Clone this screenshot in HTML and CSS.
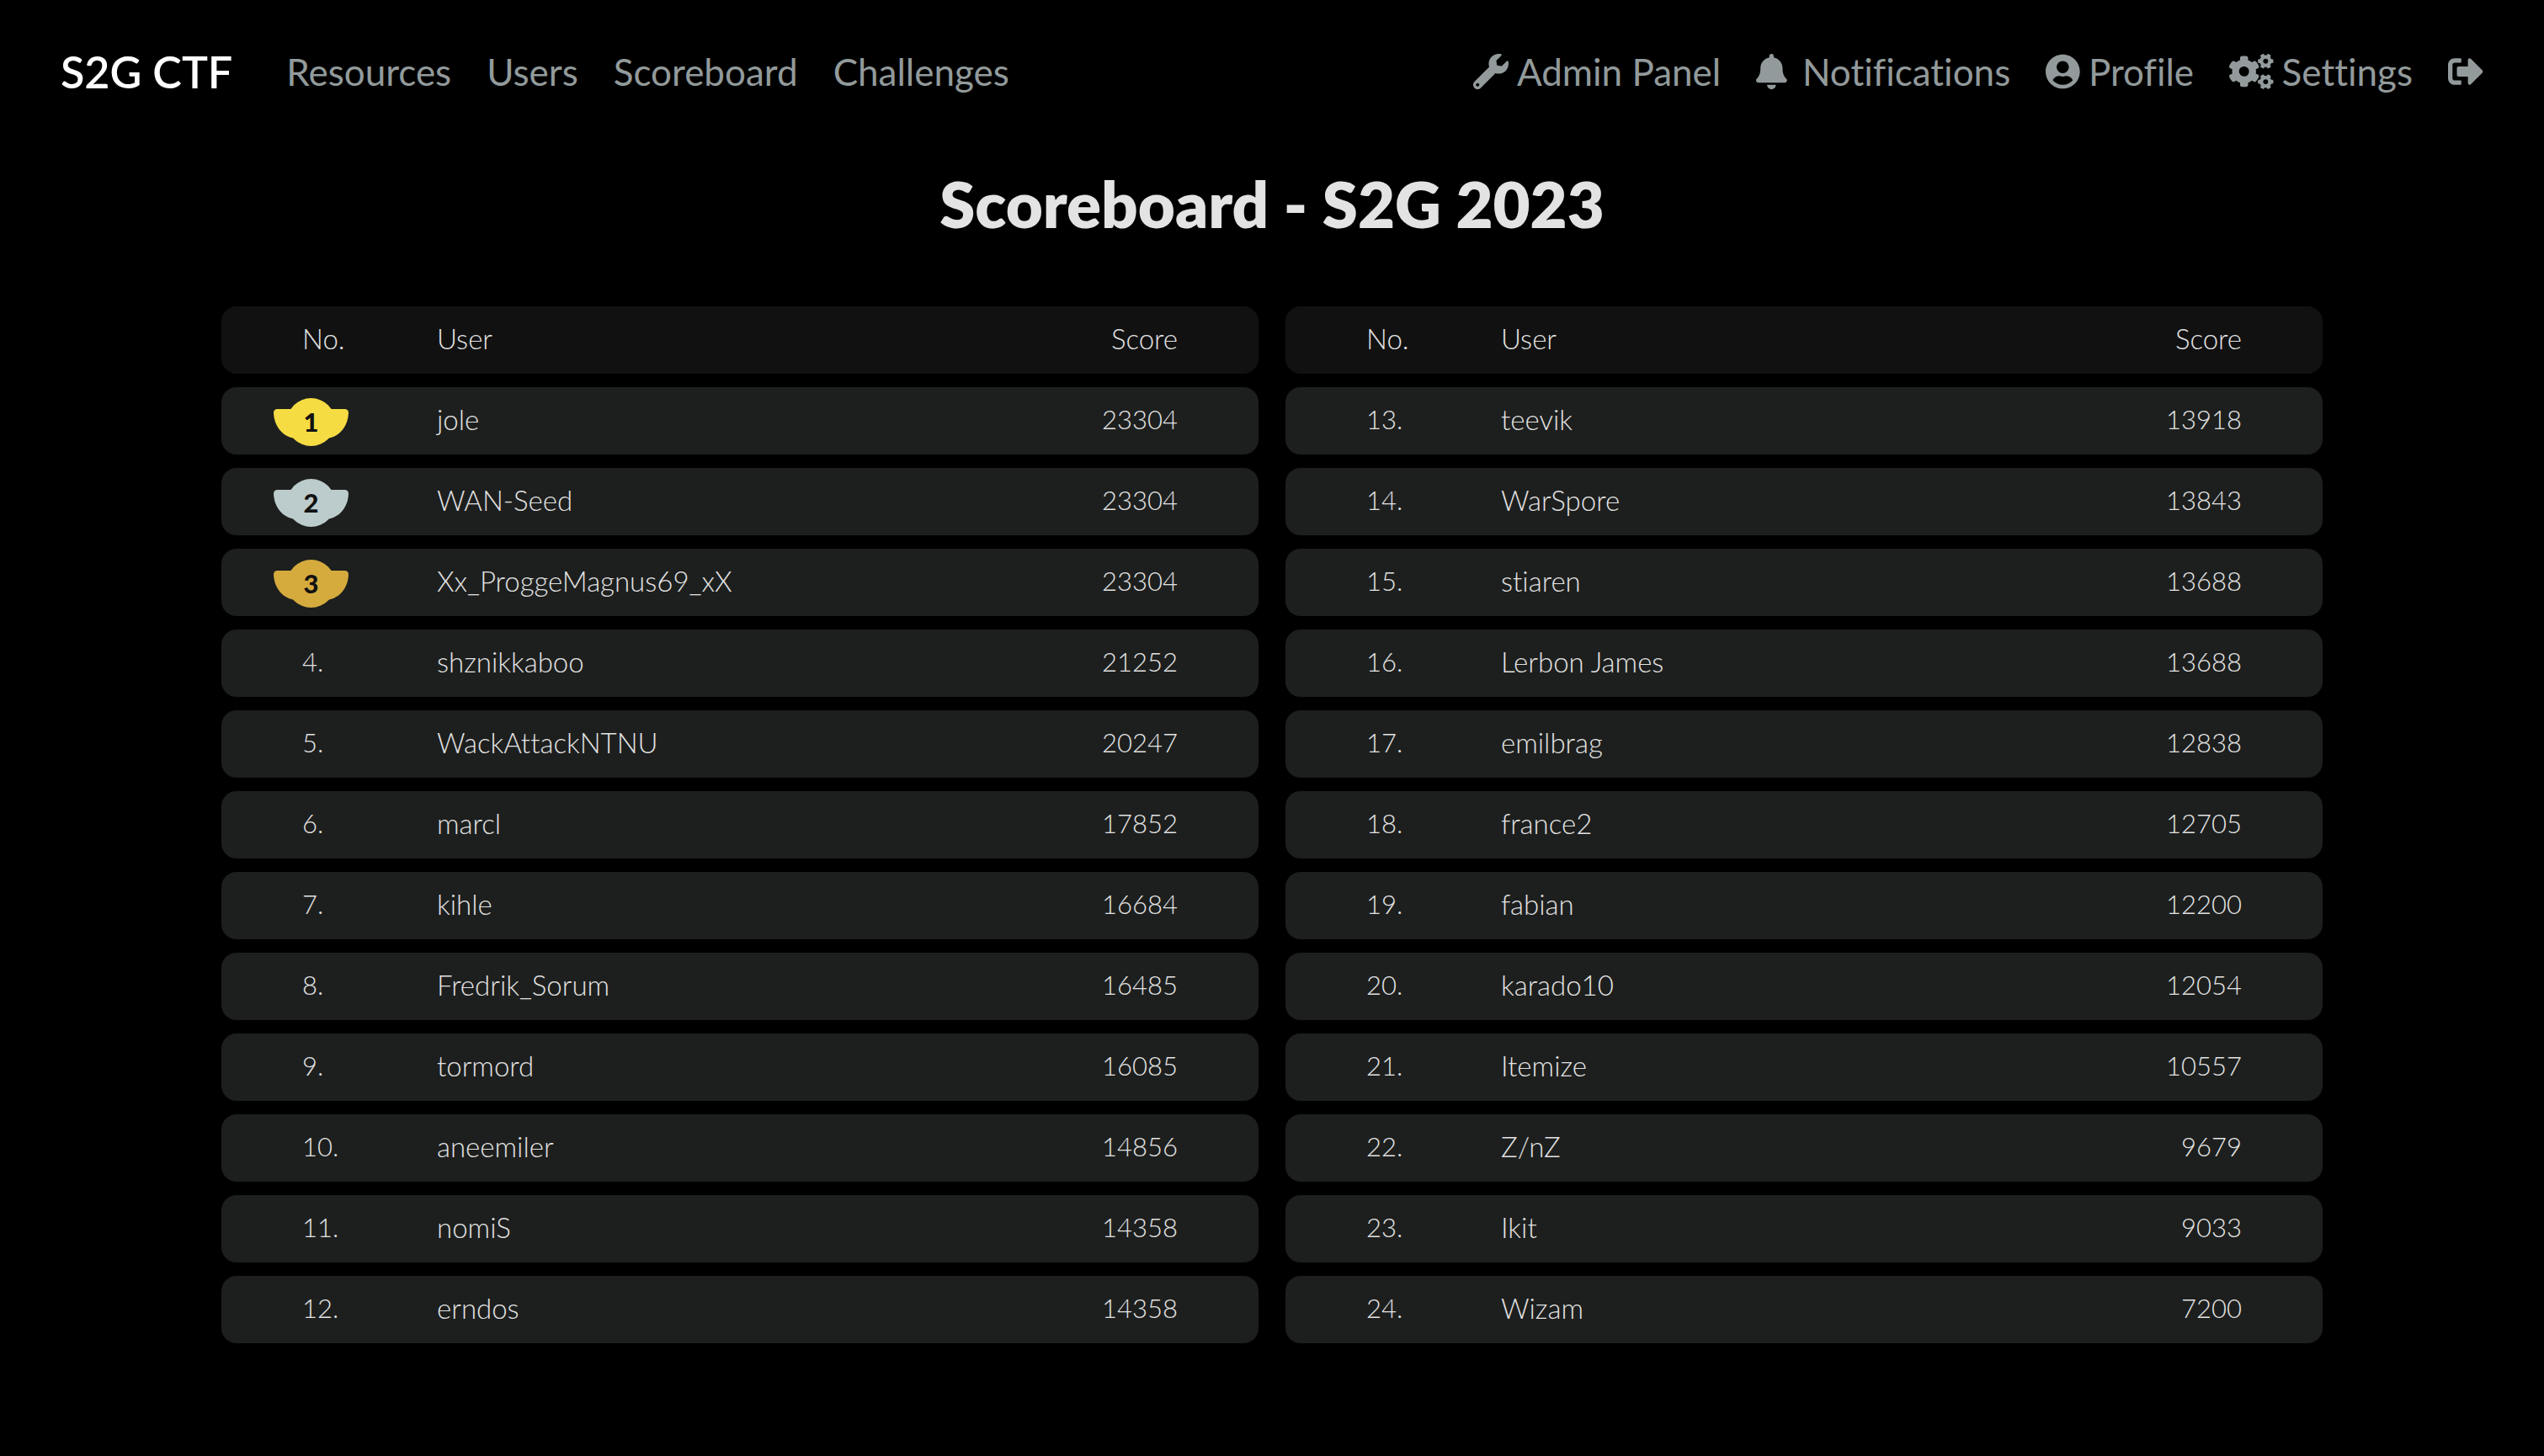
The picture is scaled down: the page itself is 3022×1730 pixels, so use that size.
FILE: index.html
```html
<!DOCTYPE html>
<html lang="en">
<head>
<meta charset="utf-8">
<meta name="viewport" content="width=device-width, initial-scale=1">
<title>Scoreboard - S2G CTF</title>
<link rel="stylesheet" href="styles.css">
</head>
<body>
<header class="navbar">
  <a class="brand" href="#">S2G CTF</a>
  <nav class="nav nav-main" aria-label="Main">
    <a class="nav-link" href="#">Resources</a>
    <a class="nav-link" href="#">Users</a>
    <a class="nav-link" href="#">Scoreboard</a>
    <a class="nav-link" href="#">Challenges</a>
  </nav>
  <nav class="nav nav-account" aria-label="Account">
    <a class="nav-link" href="#"><svg class="icon" viewBox="0 0 512 512" aria-hidden="true"><path d="M507.73 109.1c-2.24-9.03-13.54-12.09-20.12-5.51l-74.36 74.36-67.88-11.31-11.31-67.88 74.36-74.36c6.62-6.62 3.43-17.9-5.66-20.16-47.38-11.74-99.55.91-136.58 37.93-39.64 39.64-50.55 97.1-34.05 147.2L18.74 402.76c-24.99 24.99-24.99 65.51 0 90.5 24.99 24.99 65.51 24.99 90.5 0l213.21-213.21c50.12 16.71 107.47 5.68 147.37-34.22 37.07-37.07 49.7-89.32 37.91-136.73zM64 472c-13.25 0-24-10.75-24-24 0-13.26 10.75-24 24-24s24 10.74 24 24c0 13.25-10.75 24-24 24z"/></svg>Admin Panel</a>
    <a class="nav-link nav-link-bell" href="#"><svg class="icon" viewBox="0 0 448 512" aria-hidden="true"><path d="M224 512c35.32 0 63.97-28.65 63.97-64H160.03c0 35.35 28.65 64 63.97 64zm215.39-149.71c-19.32-20.76-55.47-51.99-55.47-154.29 0-77.7-54.48-139.9-127.94-155.16V32c0-17.67-14.32-32-31.98-32s-31.98 14.33-31.98 32v20.84C118.56 68.1 64.08 130.3 64.08 208c0 102.3-36.15 133.53-55.47 154.29-6 6.45-8.66 14.16-8.61 21.71.11 16.4 12.98 32 32.1 32h383.8c19.12 0 32-15.6 32.1-32 .05-7.55-2.61-15.27-8.61-21.71z"/></svg>Notifications</a>
    <a class="nav-link" href="#"><svg class="icon" viewBox="0 0 496 512" aria-hidden="true"><path d="M248 8C111 8 0 119 0 256s111 248 248 248 248-111 248-248S385 8 248 8zm0 96c48.6 0 88 39.4 88 88s-39.4 88-88 88-88-39.4-88-88 39.4-88 88-88zm0 344c-58.7 0-111.3-26.6-146.5-68.2 18.8-35.4 55.6-59.8 98.5-59.8 2.4 0 4.8.4 7.1 1.1 13 4.2 26.6 6.9 40.9 6.9 14.3 0 28-2.7 40.9-6.9 2.3-.7 4.7-1.1 7.1-1.1 42.9 0 79.7 24.4 98.5 59.8C359.3 421.4 306.7 448 248 448z"/></svg>Profile</a>
    <a class="nav-link" href="#"><svg class="icon" viewBox="0 0 640 512" aria-hidden="true"><path d="M512.1 191l-8.2 14.3c-3 5.3-9.4 7.5-15.1 5.4-11.8-4.4-22.6-10.7-32.1-18.6-4.6-3.8-5.8-10.5-2.8-15.7l8.2-14.3c-6.9-8-12.3-17.3-15.9-27.4h-16.5c-6 0-11.2-4.3-12.2-10.3-2-12-2.1-24.6 0-37.1 1-6 6.2-10.4 12.2-10.4h16.5c3.6-10.1 9-19.4 15.9-27.4l-8.2-14.3c-3-5.2-1.9-11.9 2.8-15.7 9.5-7.9 20.4-14.2 32.1-18.6 5.7-2.1 12.1.1 15.1 5.4l8.2 14.3c10.5-1.9 21.2-1.9 31.7 0L552 6.3c3-5.3 9.4-7.5 15.1-5.4 11.8 4.4 22.6 10.7 32.1 18.6 4.6 3.8 5.8 10.5 2.8 15.7l-8.2 14.3c6.9 8 12.3 17.3 15.9 27.4h16.5c6 0 11.2 4.3 12.2 10.3 2 12 2.1 24.6 0 37.1-1 6-6.2 10.4-12.2 10.4h-16.5c-3.6 10.1-9 19.4-15.9 27.4l8.2 14.3c3 5.2 1.9 11.9-2.8 15.7-9.5 7.9-20.4 14.2-32.1 18.6-5.7 2.1-12.1-.1-15.1-5.4l-8.2-14.3c-10.4 1.9-21.2 1.9-31.7 0zm-10.5-58.8c38.5 29.6 82.4-14.3 52.8-52.8-38.5-29.7-82.4 14.3-52.8 52.8zM386.3 286.1l33.7 16.8c10.1 5.8 14.5 18.1 10.5 29.1-8.9 24.2-26.4 46.4-42.6 65.8-7.4 8.9-20.2 11.1-30.3 5.3l-29.1-16.8c-16 13.7-34.6 24.6-54.9 31.7v33.6c0 11.6-8.3 21.6-19.7 23.6-24.6 4.2-50.4 4.4-75.9 0-11.5-2-20-11.9-20-23.6V418c-20.3-7.2-38.9-18-54.9-31.7L74 403c-10 5.8-22.9 3.6-30.3-5.3-16.2-19.4-33.3-41.6-42.2-65.7-4-10.9.4-23.2 10.5-29.1l33.3-16.8c-3.9-20.9-3.9-42.4 0-63.4L12 205.8c-10.1-5.8-14.6-18.1-10.5-29 8.9-24.2 26-46.4 42.2-65.8 7.4-8.9 20.2-11.1 30.3-5.3l29.1 16.8c16-13.7 34.6-24.6 54.9-31.7V57.1c0-11.5 8.2-21.5 19.6-23.5 24.6-4.2 50.5-4.4 76-.1 11.5 2 20 11.9 20 23.6v33.6c20.3 7.2 38.9 18 54.9 31.7l29.1-16.8c10-5.8 22.9-3.6 30.3 5.3 16.2 19.4 33.2 41.6 42.1 65.8 4 10.9.1 23.2-10 29.1l-33.7 16.8c3.9 21 3.9 42.5 0 63.5zm-117.6 21.1c59.2-77-28.7-164.9-105.7-105.7-59.2 77 28.7 164.9 105.7 105.7zm243.4 182.7l-8.2 14.3c-3 5.3-9.4 7.5-15.1 5.4-11.8-4.4-22.6-10.7-32.1-18.6-4.6-3.8-5.8-10.5-2.8-15.7l8.2-14.3c-6.9-8-12.3-17.3-15.9-27.4h-16.5c-6 0-11.2-4.3-12.2-10.3-2-12-2.1-24.6 0-37.1 1-6 6.2-10.4 12.2-10.4h16.5c3.6-10.1 9-19.4 15.9-27.4l-8.2-14.3c-3-5.2-1.9-11.9 2.8-15.7 9.5-7.9 20.4-14.2 32.1-18.6 5.7-2.1 12.1.1 15.1 5.4l8.2 14.3c10.5-1.9 21.2-1.9 31.7 0l8.2-14.3c3-5.3 9.4-7.5 15.1-5.4 11.8 4.4 22.6 10.7 32.1 18.6 4.6 3.8 5.8 10.5 2.8 15.7l-8.2 14.3c6.9 8 12.3 17.3 15.9 27.4h16.5c6 0 11.2 4.3 12.2 10.3 2 12 2.1 24.6 0 37.1-1 6-6.2 10.4-12.2 10.4h-16.5c-3.6 10.1-9 19.4-15.9 27.4l8.2 14.3c3 5.2 1.9 11.9-2.8 15.7-9.5 7.9-20.4 14.2-32.1 18.6-5.7 2.1-12.1-.1-15.1-5.4l-8.2-14.3c-10.4 1.9-21.2 1.9-31.7 0zM501.6 431c38.5 29.6 82.4-14.3 52.8-52.8-38.5-29.6-82.4 14.3-52.8 52.8z"/></svg>Settings</a>
    <a class="nav-link" href="#" aria-label="Log out"><svg class="icon" viewBox="0 0 512 512" aria-hidden="true"><path d="M497 273L329 441c-15 15-41 4.5-41-17v-96H152c-13.3 0-24-10.7-24-24v-96c0-13.3 10.7-24 24-24h136V88c0-21.4 25.9-32 41-17l168 168c9.3 9.4 9.3 24.6 0 34zM192 436v-40c0-6.6-5.4-12-12-12H96c-17.7 0-32-14.3-32-32V160c0-17.7 14.3-32 32-32h84c6.6 0 12-5.4 12-12V76c0-6.6-5.4-12-12-12H96c-53 0-96 43-96 96v192c0 53 43 96 96 96h84c6.6 0 12-5.4 12-12z"/></svg></a>
  </nav>
</header>

<svg class="symbols" aria-hidden="true">
  <symbol id="medal" viewBox="0 0 89 57">
    <circle cx="44.5" cy="28.5" r="28.5"/>
    <path d="M4.5 13h80a4.500 4.500 0 0 1 4.500 4.500C88.500 32 80 44.500 66 47.500H23C9 44.500 .5 32 0 17.500A4.500 4.500 0 0 1 4.500 13z"/>
  </symbol>
</svg>

<main class="page">
  <h1 class="title">Scoreboard - S2G 2023</h1>
  <div class="boards">
    <table class="board">
      <thead>
        <tr><th class="rank" scope="col">No.</th><th class="user" scope="col">User</th><th class="score" scope="col">Score</th></tr>
      </thead>
      <tbody>
        <tr><td class="rank"><span class="medal medal-gold"><svg class="medal-shape"><use href="#medal"/></svg><b class="medal-number">1</b></span></td><td class="user">jole</td><td class="score">23304</td></tr>
        <tr><td class="rank"><span class="medal medal-silver"><svg class="medal-shape"><use href="#medal"/></svg><b class="medal-number">2</b></span></td><td class="user">WAN-Seed</td><td class="score">23304</td></tr>
        <tr><td class="rank"><span class="medal medal-bronze"><svg class="medal-shape"><use href="#medal"/></svg><b class="medal-number">3</b></span></td><td class="user">Xx_ProggeMagnus69_xX</td><td class="score">23304</td></tr>
        <tr><td class="rank">4.</td><td class="user">shznikkaboo</td><td class="score">21252</td></tr>
        <tr><td class="rank">5.</td><td class="user">WackAttackNTNU</td><td class="score">20247</td></tr>
        <tr><td class="rank">6.</td><td class="user">marcl</td><td class="score">17852</td></tr>
        <tr><td class="rank">7.</td><td class="user">kihle</td><td class="score">16684</td></tr>
        <tr><td class="rank">8.</td><td class="user">Fredrik_Sorum</td><td class="score">16485</td></tr>
        <tr><td class="rank">9.</td><td class="user">tormord</td><td class="score">16085</td></tr>
        <tr><td class="rank">10.</td><td class="user">aneemiler</td><td class="score">14856</td></tr>
        <tr><td class="rank">11.</td><td class="user">nomiS</td><td class="score">14358</td></tr>
        <tr><td class="rank">12.</td><td class="user">erndos</td><td class="score">14358</td></tr>
      </tbody>
    </table>
    <table class="board">
      <thead>
        <tr><th class="rank" scope="col">No.</th><th class="user" scope="col">User</th><th class="score" scope="col">Score</th></tr>
      </thead>
      <tbody>
        <tr><td class="rank">13.</td><td class="user">teevik</td><td class="score">13918</td></tr>
        <tr><td class="rank">14.</td><td class="user">WarSpore</td><td class="score">13843</td></tr>
        <tr><td class="rank">15.</td><td class="user">stiaren</td><td class="score">13688</td></tr>
        <tr><td class="rank">16.</td><td class="user">Lerbon James</td><td class="score">13688</td></tr>
        <tr><td class="rank">17.</td><td class="user">emilbrag</td><td class="score">12838</td></tr>
        <tr><td class="rank">18.</td><td class="user">france2</td><td class="score">12705</td></tr>
        <tr><td class="rank">19.</td><td class="user">fabian</td><td class="score">12200</td></tr>
        <tr><td class="rank">20.</td><td class="user">karado10</td><td class="score">12054</td></tr>
        <tr><td class="rank">21.</td><td class="user">Itemize</td><td class="score">10557</td></tr>
        <tr><td class="rank">22.</td><td class="user">Z/nZ</td><td class="score">9679</td></tr>
        <tr><td class="rank">23.</td><td class="user">Ikit</td><td class="score">9033</td></tr>
        <tr><td class="rank">24.</td><td class="user">Wizam</td><td class="score">7200</td></tr>
      </tbody>
    </table>
  </div>
</main>
</body>
</html>
```
FILE: styles.css
```css
* {
  box-sizing: border-box;
}

body {
  margin: 0;
  background: #000;
  color: #e3e3e3;
  font-family: Lato, "Liberation Sans", sans-serif;
  font-variant-ligatures: none;
}

/* Navigation */
.navbar {
  display: flex;
  align-items: center;
  gap: 64px;
  padding: 47px 72px 49px;
}

.brand {
  color: #fff;
  font-size: 52px;
  font-weight: 600;
  line-height: 76px;
  text-decoration: none;
}

.nav {
  display: flex;
  align-items: center;
  gap: 42px;
}

.nav-account {
  margin-left: auto;
}

.nav-link {
  display: flex;
  align-items: center;
  gap: 10px;
  color: #929a9b;
  font-size: 44px;
  line-height: 64px;
  text-decoration: none;
}

.nav-link-bell {
  gap: 18px;
}

.icon {
  display: block;
  height: 42px;
  fill: currentColor;
}

.symbols {
  display: none;
}

/* Scoreboard */
.page {
  max-width: 2496px;
  margin: 0 auto;
}

.title {
  margin: 18px 0 54px;
  font-size: 76px;
  font-weight: 800;
  line-height: 104px;
  text-align: center;
}

.boards {
  display: grid;
  grid-template-columns: 1fr 1fr;
  gap: 32px;
}

.board {
  width: 100%;
  table-layout: fixed;
  border-collapse: separate;
  border-spacing: 0 16px;
  font-size: 33px;
  line-height: 40px;
}

.board th,
.board td {
  height: 80px;
  padding: 0 0 4px;
  font-weight: 300;
  text-align: left;
  vertical-align: middle;
}

.board th {
  background: #111;
}

.board td {
  background: #1d1f1e;
}

.board .rank {
  width: 256px;
  padding-left: 96px;
  border-radius: 18px 0 0 18px;
}

.board .score {
  width: 256px;
  padding-right: 96px;
  border-radius: 0 18px 18px 0;
  text-align: right;
}

.board td.rank,
.board td.score {
  font-size: 31px;
}

/* Medals share one grid cell between shape and number */
.medal {
  display: grid;
  place-items: center;
  width: 89px;
  margin: 6px 0 0 -34px;
}

.medal-shape,
.medal-number {
  grid-area: 1 / 1;
}

.medal-shape {
  width: 89px;
  height: 57px;
}

.medal-number {
  color: #111;
  font-weight: 900;
}

.medal-gold {
  fill: #f5dc43;
}

.medal-silver {
  fill: #bccbcb;
}

.medal-bronze {
  fill: #d5ab3e;
}
```
